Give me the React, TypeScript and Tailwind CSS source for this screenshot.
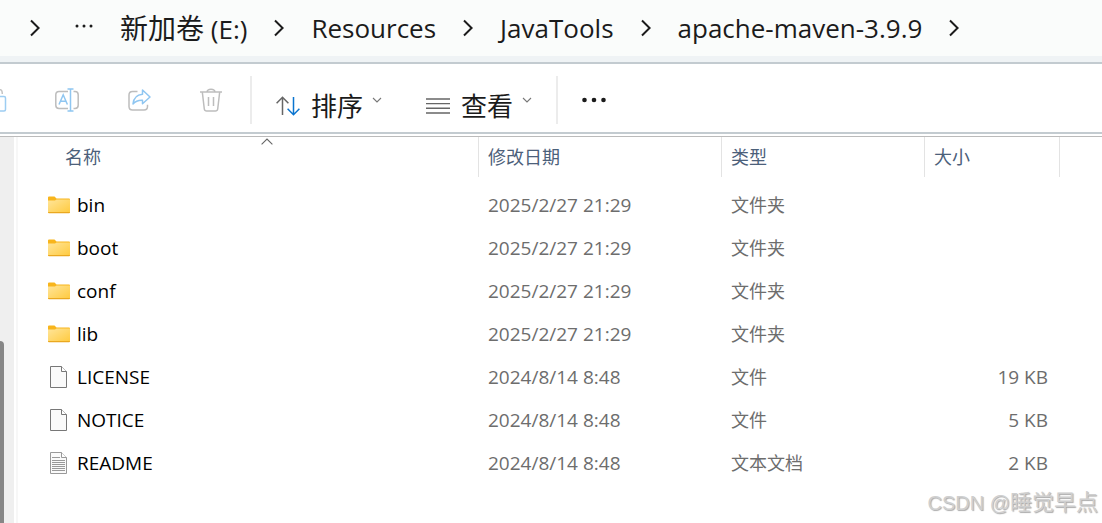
import { Fragment } from 'react'

type Kind = 'folder' | 'file' | 'text'
type Entry = { name: string; modified: string; kind: Kind; size?: string }

const DRIVE = { label: '新加卷', letter: '(E:)' }
const PATH = ['Resources', 'JavaTools', 'apache-maven-3.9.9']

const TYPE_LABELS: Record<Kind, string> = { folder: '文件夹', file: '文件', text: '文本文档' }

const ENTRIES: Entry[] = [
  { name: 'bin', modified: '2025/2/27 21:29', kind: 'folder' },
  { name: 'boot', modified: '2025/2/27 21:29', kind: 'folder' },
  { name: 'conf', modified: '2025/2/27 21:29', kind: 'folder' },
  { name: 'lib', modified: '2025/2/27 21:29', kind: 'folder' },
  { name: 'LICENSE', modified: '2024/8/14 8:48', kind: 'file', size: '19 KB' },
  { name: 'NOTICE', modified: '2024/8/14 8:48', kind: 'file', size: '5 KB' },
  { name: 'README', modified: '2024/8/14 8:48', kind: 'text', size: '2 KB' },
]

const headCls = 'flex h-10 items-center border-r border-[#e3e3e3] text-lg font-normal text-[#4c607a]'
const iconBtnCls = 'flex h-12 w-6 shrink-0 items-center justify-center'
const menuBtnCls = 'flex h-12 shrink-0 items-center gap-[11px] pt-3 text-[26px] leading-8 text-[#1b1b1b]'

function CrumbArrow() {
  return (
    <svg width="10" height="18" viewBox="0 0 10 18" fill="none" stroke="#1b1b1b" strokeWidth="2" className="shrink-0">
      <path d="M1 1.5 8.6 9 1 16.5" />
    </svg>
  )
}

function SmallCaret() {
  return (
    <svg width="10" height="6" viewBox="0 0 10 6" fill="none" stroke="#777" strokeWidth="1.1" className="-ml-0.5 mb-3">
      <path d="m1 1 4 4 4-4" />
    </svg>
  )
}

function Divider() {
  return <div className="h-12 w-0.5 shrink-0 bg-[#ececec]" />
}

function PasteIcon() {
  return (
    <svg width="24" height="24" viewBox="0 0 24 24" fill="none" strokeWidth="1.5">
      <path d="M4 20V4.500q0-1.500 1.500-1.500H8M16 1.800h1.500Q19.300 2 19.300 6M8 1.500h8v3H8z" stroke="#c3c3c3" />
      <rect x="9" y="8.500" width="13.500" height="14.500" rx="1.500" stroke="#9dcdf2" />
    </svg>
  )
}

function RenameIcon() {
  return (
    <svg width="24" height="24" viewBox="0 0 24 24" fill="none" strokeWidth="1.5">
      <path d="M13 3.600H4Q.8 3.600.8 6.800v10.400q0 3.200 3.200 3.200h9M18.500 3.600H20q3.200 0 3.200 3.200v10.400q0 3.200-3.200 3.200h-1.500" stroke="#bdbdbd" />
      <path d="M12.500 1h6M12.500 23h6M15.500 1v22M4 16.500 8.200 6.800l4.200 9.700M5.400 13.200H11" stroke="#8fc6f1" />
    </svg>
  )
}

function ShareIcon() {
  return (
    <svg width="24" height="24" viewBox="0 0 24 24" fill="none" strokeWidth="1.5" strokeLinejoin="round">
      <path d="M10.500 3.500H5.500Q2 3.500 2 7v11.500Q2 22 5.500 22h11.500q3.500 0 3.500-3.500v-1.700" stroke="#bdbdbd" />
      <path d="m15.500 2 7.500 7-7.500 6.800v-3.600c-4-.2-6.800.5-9.500 3.800.6-5.600 4-9.400 9.500-9.800z" stroke="#8fc6f1" />
    </svg>
  )
}

function DeleteIcon() {
  return (
    <svg width="24" height="24" viewBox="0 0 24 24" fill="none" stroke="#bdbdbd" strokeWidth="1.5">
      <path d="M1 4h22M8 4c.3-3.800 7.700-3.800 8 0M3.300 4l2 17q.3 2 2.300 2h8.800q2 0 2.300-2l2-17M9.500 9v9M14.500 9v9" />
    </svg>
  )
}

function SortIcon() {
  return (
    <svg width="24" height="20" viewBox="0 0 24 20" fill="none" strokeWidth="1.5">
      <path d="M6.500 19V1.500M.6 7.200l5.900-6 5.900 6" stroke="#666" />
      <path d="M17.500 1v17.500M11.600 12.800l5.900 6 5.900-6" stroke="#0a74cf" />
    </svg>
  )
}

function ViewIcon() {
  return (
    <svg width="24" height="16" viewBox="0 0 24 16" stroke="#666" strokeWidth="1.4">
      <path d="M0 1h24M0 5.600h24M0 10.300h24M0 15h24" />
    </svg>
  )
}

function FolderIcon() {
  return (
    <svg width="22" height="18" viewBox="0 0 22 18">
      <defs>
        <linearGradient id="folder" x1="0" y1="0" x2="1" y2="1">
          <stop offset="0" stopColor="#ffe59a" />
          <stop offset="1" stopColor="#ffca3e" />
        </linearGradient>
      </defs>
      <path d="M0 1.500Q0 .5 1 .5h5.500l2 2H21q1 0 1 1V9H0z" fill="#f8b51c" />
      <path d="M0 4.500h7l1.500-1H22V16q0 1-1 1H1q-1 0-1-1z" fill="url(#folder)" />
      <path d="M0 16h22q0 1.300-1 1.300H1Q0 17.300 0 16z" fill="#eaa820" />
    </svg>
  )
}

function PageIcon({ lines }: { lines: boolean }) {
  return (
    <svg width="22" height="22" viewBox="0 0 22 22" fill="none" stroke={lines ? '#999' : '#777'}>
      <path d="M2.500.500h11l5 5v16h-16z" fill="#fafafa" />
      <path d="M13.500.500v5h5" fill="#fff" />
      {lines && <path d="M4 5.500h8M4 8.500h13M4 10.500h13M4 12.500h13M4 14.500h13M4 16.500h13M4 18.500h13" />}
    </svg>
  )
}

function Breadcrumbs() {
  return (
    <nav aria-label="Path" className="flex h-14 items-center gap-[27px] overflow-hidden bg-[#fafcfb] pl-[30px] text-[26px] leading-8 text-[#1b1b1b]">
      <CrumbArrow />
      <button type="button" aria-label="More folders" className="mb-1 ml-2">
        <svg width="18" height="4" viewBox="0 0 18 4" fill="#1b1b1b">
          <circle cx="2" cy="2" r="1.500" />
          <circle cx="9" cy="2" r="1.500" />
          <circle cx="16" cy="2" r="1.500" />
        </svg>
      </button>
      <a href="#" className="whitespace-nowrap"><span className="text-[28px] leading-8">{DRIVE.label}</span> {DRIVE.letter}</a>
      <CrumbArrow />
      {PATH.map(part => (
        <Fragment key={part}>
          <a href="#" className="whitespace-nowrap">{part}</a>
          <CrumbArrow />
        </Fragment>
      ))}
    </nav>
  )
}

function Toolbar() {
  return (
    <div className="flex items-center overflow-hidden border-y-2 border-[#c3cbd0] pt-3 pb-2">
      <div className="-ml-[17px] mr-[27px] flex gap-12">
        <button type="button" aria-label="Paste" className={iconBtnCls}><PasteIcon /></button>
        <button type="button" aria-label="Rename" className={iconBtnCls}><RenameIcon /></button>
        <button type="button" aria-label="Share" className={iconBtnCls}><ShareIcon /></button>
        <button type="button" aria-label="Delete" className={iconBtnCls}><DeleteIcon /></button>
      </div>
      <Divider />
      <div className="mx-6 flex gap-11">
        <button type="button" className={menuBtnCls}><SortIcon />排序<SmallCaret /></button>
        <button type="button" className={menuBtnCls}><ViewIcon />查看<SmallCaret /></button>
      </div>
      <Divider />
      <button type="button" aria-label="See more" className="ml-6 shrink-0">
        <svg width="24" height="6" viewBox="0 0 24 6" fill="#1b1b1b">
          <circle cx="2.500" cy="3" r="2.300" />
          <circle cx="12" cy="3" r="2.300" />
          <circle cx="21.500" cy="3" r="2.300" />
        </svg>
      </button>
    </div>
  )
}

function FileTable() {
  return (
    <table className="w-full table-fixed self-start text-left">
      <colgroup>
        <col className="w-[461px]" />
        <col className="w-[243px]" />
        <col className="w-[203px]" />
        <col className="w-[135px]" />
        <col />
      </colgroup>
      <thead>
        <tr>
          <th className="p-0 pb-1.5">
            <div className={`${headCls} relative pl-[47px]`}>
              名称
              <svg width="12" height="7" viewBox="0 0 12 7" fill="none" stroke="#666" strokeWidth="1.1" className="absolute top-px right-[205px]">
                <path d="m.6 6.400 5.400-5.400 5.400 5.400" />
              </svg>
            </div>
          </th>
          <th className="p-0 pb-1.5"><div className={`${headCls} pl-[9px]`}>修改日期</div></th>
          <th className="p-0 pb-1.5"><div className={`${headCls} pl-[9px]`}>类型</div></th>
          <th className="p-0 pb-1.5"><div className={`${headCls} pl-[9px]`}>大小</div></th>
          <td />
        </tr>
      </thead>
      <tbody className="text-[19px] leading-6 text-[#6d6d6d]">
        {ENTRIES.map(e => (
          <tr key={e.name} className="h-[43px]">
            <td className="p-0 pl-[30px]">
              <div className="flex items-center gap-[7px] text-black">
                {e.kind === 'folder' ? <FolderIcon /> : <PageIcon lines={e.kind === 'text'} />}
                {e.name}
              </div>
            </td>
            <td className="p-0 pl-[9px]">{e.modified}</td>
            <td className="p-0 pl-[9px] text-lg leading-6">{TYPE_LABELS[e.kind]}</td>
            <td className="p-0 pr-3 text-right">{e.size}</td>
            <td />
          </tr>
        ))}
      </tbody>
    </table>
  )
}

export default function App() {
  return (
    <div className="relative flex min-h-screen flex-col bg-white font-['Open_Sans','Noto_Sans_CJK_SC',sans-serif]">
      <header className="bg-[#eff3f5]">
        <Breadcrumbs />
        <div className="h-1.5" />
      </header>
      <Toolbar />
      <main className="mt-0.5 flex grow border-t border-[#bbb]">
        {/* edge of the navigation pane with its scrollbar */}
        <div className="mr-0.5 w-3.5 shrink-0 bg-[#efefef] pt-[204px]">
          <div className="h-full w-1 rounded-tr bg-[#868686]" />
        </div>
        <div className="w-0.5 shrink-0 bg-[#f7f7f7]" />
        <FileTable />
      </main>
      <div className="absolute right-1 bottom-1 font-['Liberation_Sans','Noto_Sans_CJK_SC',sans-serif] text-xl leading-8 text-[#cfcfcf] [text-shadow:1px_1px_1px_#aaa]">
        CSDN @<span className="text-[22px] leading-8">睡觉早点</span>
      </div>
    </div>
  )
}
